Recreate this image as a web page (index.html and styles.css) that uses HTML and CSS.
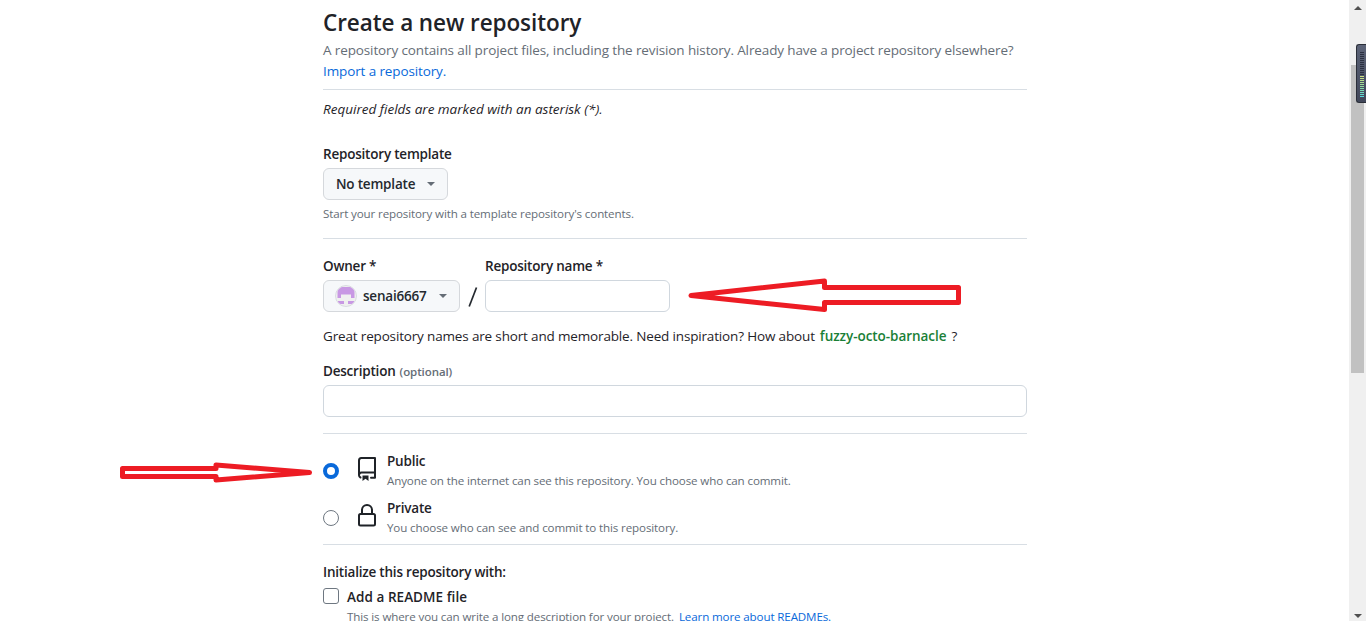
FILE: index.html
```html
<!DOCTYPE html>
<html lang="en">
<head>
<meta charset="utf-8">
<title>Create a new repository</title>
<link rel="stylesheet" href="styles.css">
</head>
<body>
<main class="page">
  <form class="form">
    <h1 class="title"><span>Create a new repository</span></h1>
    <p class="lead"><span class="lead-text">A repository contains all project files, including the revision history. Already have a project repository elsewhere?</span><br><a class="link import">Import a repository.</a></p>
    <hr class="rule">
    <p class="required"><span>Required fields are marked with an asterisk (*).</span></p>

    <div class="label template-label"><span>Repository template</span></div>
    <button type="button" class="button template-button"><span>No template</span><i class="caret"></i></button>
    <p class="note template-note"><span>Start your repository with a template repository's contents.</span></p>
    <hr class="rule">

    <div class="name-row">
      <div class="owner">
        <div class="label"><span>Owner *</span></div>
        <button type="button" class="button owner-button">
          <svg class="avatar" viewBox="0 0 22 22" width="22" height="22">
            <defs><clipPath id="round"><circle cx="11" cy="11" r="10"/></clipPath></defs>
            <circle cx="11" cy="11" r="10.5" fill="#f0f0f0" stroke="#d9dbe0"/>
            <path clip-path="url(#round)" fill="#c898e4" d="M2.500 2h17v11h-3.500V9.500h-10v3.500H2.500zM3 16h6v3H3zM13 16h6v3h-6z"/>
          </svg>
          <span>senai6667</span><i class="caret"></i>
        </button>
      </div>
      <svg class="slash" viewBox="0 0 10 22" width="10" height="22"><path d="M8.500 1.500L1.200 20.500" fill="none" stroke="#24292f" stroke-width="1.700"/></svg>
      <div class="repo">
        <div class="label"><span>Repository name *</span></div>
        <input class="input repo-input" aria-label="Repository name">
      </div>
    </div>
    <p class="hint"><span class="hint-text">Great repository names are short and memorable. Need inspiration? How about</span><b class="suggestion">fuzzy-octo-barnacle</b><span>?</span></p>

    <div class="label description-label"><span>Description</span><small class="optional">(optional)</small></div>
    <input class="input description-input" aria-label="Description">
    <hr class="rule">

    <div class="choice public">
      <i class="radio checked"></i>
      <svg class="icon" viewBox="0 0 24 24" width="24" height="24"><path fill="none" stroke="#1f2328" stroke-width="2" stroke-linejoin="round" stroke-linecap="round" d="M5.500 20.500C4.500 20 4 19.300 4 18.300V3.500C4 2 4.800 1 6.300 1H20V20.800H16M4 18.300C4 16.500 5 15.600 6.500 15.600H20"/><path fill="#1f2328" d="M7.500 18.500h6v5.500l-3-2.200-3 2.200z"/></svg>
      <div class="choice-text">
        <div class="label"><span>Public</span></div>
        <p class="note"><span>Anyone on the internet can see this repository. You choose who can commit.</span></p>
      </div>
    </div>
    <div class="choice private">
      <i class="radio"></i>
      <svg class="icon" viewBox="0 0 24 24" width="24" height="24" fill="none" stroke="#1f2328" stroke-width="2"><rect x="4" y="10" width="16" height="11.500" rx="1.500"/><path d="M7 10V6a5 5 0 0 1 10 0V10"/></svg>
      <div class="choice-text">
        <div class="label"><span>Private</span></div>
        <p class="note"><span>You choose who can see and commit to this repository.</span></p>
      </div>
    </div>
    <hr class="rule">

    <div class="label init-label"><span>Initialize this repository with:</span></div>
    <div class="readme">
      <i class="checkbox"></i>
      <div class="readme-text">
        <div class="label"><span>Add a README file</span></div>
        <p class="note"><span class="t-readme">This is where you can write a long description for your project.</span><a class="link">Learn more about READMEs.</a></p>
      </div>
    </div>
  </form>

  <svg class="mark mark-name" viewBox="0 0 275 36" width="275" height="36"><path d="M4 17.500L137.500 3V9.500H271.500V24.500H137.500V31.500Z"/></svg>
  <svg class="mark mark-public" viewBox="0 0 198 24" width="198" height="24"><path d="M4.500 7.500H98V4L191.500 11.500L98 19V15.500H4.500Z"/></svg>

  <aside class="scrollbar">
    <svg class="arrow" viewBox="0 0 8 4" width="8" height="4"><path d="M0 4L4 0L8 4Z"/></svg>
    <div class="thumb"></div>
    <svg class="arrow arrow-down" viewBox="0 0 8 4" width="8" height="4"><path d="M0 0L4 4L8 0Z"/></svg>
    <div class="meter"><i class="meter-off"></i><i class="meter-on"></i></div>
  </aside>
</main>
</body>
</html>
```
FILE: styles.css
```css
* { box-sizing: border-box; }
body { margin: 0; overflow: hidden; background: #fff; color: #1f2328; font: 13.5px/21px "Open Sans", "Noto Sans", sans-serif; letter-spacing: -0.12px; }
p, h1 { margin: 0; }
span, a, b, small { white-space: nowrap; }
.page { position: relative; display: flex; justify-content: space-between; height: 621px; overflow: hidden; }
.form { width: 704px; margin-left: 323px; padding-top: 5px; }
.title { height: 35px; font-size: 22.500px; line-height: 35px; font-weight: 600; letter-spacing: -0.08px; }
.lead { height: 42px; color: #656d76; }
.link { color: #0969da; }
.rule { height: 1px; margin: 0; border: 0; background: #d8dee4; }
.lead + .rule { margin-top: 7px; }
.required { margin-top: 9px; font-style: italic; letter-spacing: 0; }
.label { height: 21px; font-weight: 600; letter-spacing: -0.21px; }
.template-label { margin-top: 24px; }
.button { display: flex; align-items: center; height: 32px; margin: 0; border: 1px solid #d5d8dc; border-radius: 6px; background: #f6f8fa; color: #24292f; font: 600 13.5px/20px "Open Sans", "Noto Sans", sans-serif; letter-spacing: -0.2px; }
.template-button { width: 125px; margin-top: 3px; padding: 0 12px; justify-content: space-between; }
.caret { width: 8px; height: 4px; background: #656d76; clip-path: polygon(0 0, 100% 0, 50% 100%); }
.note { color: #656d76; font-size: 11.600px; line-height: 18px; height: 18px; letter-spacing: -0.13px; }
.template-note { margin-top: 5px; margin-bottom: 15px; }
.name-row { display: flex; align-items: flex-end; margin-top: 17px; }
.name-row .label { margin-bottom: 3px; }
.owner { width: 137px; }
.owner-button { width: 137px; padding: 0 12px 0 11px; }
.owner-button .caret { margin-left: auto; }
.avatar { flex: none; margin-right: 6px; }
.slash { margin: 0 7px 4px 8px; }
.input { display: block; height: 32px; padding: 0 12px; border: 1px solid #d0d7de; border-radius: 6px; background: #fff; }
.repo-input { width: 185px; }
.hint { display: flex; height: 21px; margin-top: 14px; letter-spacing: -0.16px; }
.suggestion { margin: 0 5px 0 5px; color: #1a7f37; font-weight: 600; letter-spacing: -0.05px; }
.description-label { display: flex; margin-top: 14px; }
.optional { margin-left: 4px; color: #656d76; font-size: 11.500px; line-height: 22px; letter-spacing: -0.08px; }
.description-input { width: 704px; margin: 3px 0 16px; }
.choice { display: flex; height: 47px; }
.public { margin-top: 17px; }
.radio { flex: none; width: 16px; height: 16px; margin-top: 12px; border: 1px solid #6e7781; border-radius: 50%; }
.radio.checked { border: 4px solid #0969da; }
.icon { flex: none; margin: 6px 8px 0 16px; }
.private { height: 46px; }
.init-label { margin-top: 17px; }
.readme { display: flex; margin-top: 4px; }
.readme .label { letter-spacing: 0.05px; }
.checkbox { flex: none; width: 16px; height: 16px; margin: 1px 8px 0 0; border: 1px solid #6e7781; border-radius: 3px; }
.t-readme { margin-right: 5px; }
.mark { position: absolute; fill: none; stroke: #ed1c24; stroke-width: 5; stroke-linejoin: round; }
.mark-name { left: 687px; top: 278px; }
.mark-public { left: 118px; top: 461px; }
.scrollbar { position: relative; display: flex; flex-direction: column; align-items: center; width: 17px; padding: 6px 0 3px; background: #f0f0f0; }
.arrow { flex: none; fill: #505050; }
.thumb { width: 13px; height: 308px; margin-top: 55px; background: #c1c1c1; }
.arrow-down { margin-top: auto; }
.meter { position: absolute; left: 7px; top: 44px; width: 10px; height: 59px; padding: 7px 2px 0 3px; border: 1px solid #2a2e38; border-right: 0; border-radius: 3px 0 0 3px; background: linear-gradient(#5c6377, #41475a); }
.meter i { display: block; width: 4px; }
.meter-off { height: 24px; background: repeating-linear-gradient(#2b3040 0 1px, transparent 1px 2px); }
.meter-on { height: 21px; background: repeating-linear-gradient(transparent 0 1px, #4b5164 1px 2px), linear-gradient(#d0e080, #8fdc9c, #55d8dc); }
```
